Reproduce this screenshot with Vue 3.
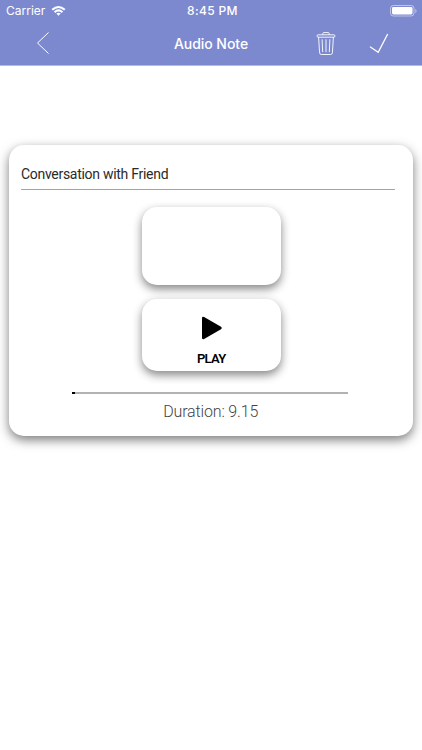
<template>
  <div class="screen">
    <!-- header -->
    <header class="header">
      <div class="status-bar">
        <div class="carrier">
          <span class="carrier-name">Carrier</span>
          <svg class="wifi" width="15" height="12" viewBox="0 0 16 12" fill="none" stroke="#fff" stroke-width="2.2">
            <path d="M1.3 4.7Q8 -1.3 14.7 4.7" />
            <path d="M3.8 7.3Q8 3.5 12.2 7.3" />
            <path d="M5.7 8.7Q8 6.9 10.3 8.7L8 11Z" fill="#fff" stroke="none" />
          </svg>
        </div>
        <span class="time">8:45 PM</span>
        <div class="battery">
          <svg width="27" height="12" viewBox="0 0 27 12">
            <rect x="0.5" y="0.5" width="23.5" height="10.5" rx="2.8" fill="none" stroke="#fff" stroke-opacity="0.5" />
            <rect x="2" y="2" width="20.5" height="7.5" rx="1.4" fill="#fff" />
            <path d="M25.3 4v4q1.3-.6 1.3-2t-1.3-2z" fill="#fff" fill-opacity="0.5" />
          </svg>
        </div>
      </div>
      <nav class="nav-bar">
        <button class="nav-button back" @click="goBack">
          <svg width="14" height="24" viewBox="0 0 14 24" fill="none" stroke="#fff">
            <path d="M12.5 1.5L1.5 12l11 10.5" />
          </svg>
        </button>
        <h1 class="title">Audio Note</h1>
        <div class="actions">
          <button class="nav-button" @click="removeNote">
            <svg width="20" height="25" viewBox="0 0 20 25" fill="none" stroke="#fff" stroke-width="0.9">
              <path d="M6.8 3.8V2.6q0-1 1-1h4.4q1 0 1 1v1.2" />
              <rect x="1.2" y="3.8" width="17.6" height="2.4" rx="0.8" />
              <path d="M2.6 6.2l1 15.6q.1 1.7 1.8 1.7h9.2q1.7 0 1.8-1.7l1-15.6" />
              <path d="M6.1 8.3l.6 12.8M10 8.3v12.8M13.9 8.3l-.6 12.8" />
            </svg>
          </button>
          <button class="nav-button save" @click="saveNote">
            <svg width="20" height="21" viewBox="0 0 20 21" fill="none" stroke="#fff" stroke-width="1.3">
              <path d="M1 13.7l8.2 5.5L18.7 1" />
            </svg>
          </button>
        </div>
      </nav>
    </header>

    <!-- note -->
    <main class="card">
      <input v-model="noteTitle" class="note-title" type="text" />
      <div class="panel"></div>
      <button class="panel play" @click="togglePlay">
        <svg class="play-icon" width="22" height="24" viewBox="0 0 22 24">
          <path d="M1 2.2Q1 0 3.1 1.1L20 10.8Q21.8 12 20 13.2L3.1 22.9Q1 24 1 21.8Z" fill="#000" />
        </svg>
        <span class="play-label">PLAY</span>
      </button>
      <div class="progress">
        <div class="progress-value" :style="{ width: progress + '%' }"></div>
      </div>
      <p class="duration">Duration: {{ duration }}</p>
    </main>
  </div>
</template>

<script setup>
import { ref } from 'vue';

const noteTitle = ref('Conversation with Friend');
const duration = ref('9.15');
// playback position in percent
const progress = ref(1.1);
const isPlaying = ref(false);

const togglePlay = () => {
  isPlaying.value = !isPlaying.value;
};

const goBack = () => {
  window.history.back();
};

const removeNote = () => {
  noteTitle.value = '';
  progress.value = 0;
};

const saveNote = () => {
  isPlaying.value = false;
};
</script>

<style>
body {
  margin: 0;
  background: #fff;
}
</style>

<style scoped>
.screen {
  height: 750px;
  overflow: hidden;
  background: #fff;
  font-family: "Inter", "Liberation Sans", sans-serif;
}

button {
  padding: 0;
  border: none;
  background: none;
  color: inherit;
  cursor: pointer;
}

svg {
  display: block;
}

.header {
  box-sizing: border-box;
  height: 66px;
  background: #7c89cf;
  border-bottom: 1px solid #b4bbdf;
  color: #fff;
}

.status-bar {
  display: grid;
  grid-template-columns: 1fr auto 1fr;
  align-items: center;
  height: 21px;
  padding: 0 5px 0 6px;
}

.carrier {
  display: flex;
  align-items: center;
  gap: 6px;
  font-size: 12px;
}

.time {
  margin-left: 2px;
  font-size: 12px;
  font-weight: 500;
  letter-spacing: 0.35px;
}

.battery {
  justify-self: end;
}

.nav-bar {
  display: grid;
  grid-template-columns: 1fr auto 1fr;
  align-items: center;
  height: 44px;
}

.back {
  justify-self: start;
  margin-left: 36px;
}

.title {
  margin: 0;
  font-size: 14px;
  font-weight: 500;
  letter-spacing: -0.05px;
}

.actions {
  display: flex;
  align-items: center;
  justify-content: flex-end;
  gap: 33px;
  padding-right: 33px;
}

.card {
  box-sizing: border-box;
  display: flex;
  flex-direction: column;
  align-items: center;
  height: 291px;
  margin: 79px 9.5px 0 9.4px;
  padding: 14px 18px 0 11.5px;
  border-radius: 15px;
  background: #fff;
  box-shadow: 0 4px 11px rgba(0, 0, 0, 0.52);
}

.note-title {
  box-sizing: border-box;
  width: 100%;
  height: 31px;
  margin-bottom: 17px;
  padding: 0;
  border: none;
  border-bottom: 1px solid #a5a5a5;
  outline: none;
  background: none;
  color: #2a2a2a;
  font-family: "Roboto", sans-serif;
  font-size: 14px;
  letter-spacing: -0.28px;
}

.panel {
  flex: none;
  width: 139px;
  height: 78px;
  margin-left: 7px;
  border-radius: 15px;
  background: #fff;
  box-shadow: 0 4px 10px rgba(0, 0, 0, 0.48);
}

.play {
  display: flex;
  flex-direction: column;
  align-items: center;
  height: 72px;
  margin-top: 14px;
  padding-top: 17px;
  color: #000;
}

.play-icon {
  margin-left: 2px;
}

.play-label {
  margin-top: 11px;
  font-family: "Roboto", sans-serif;
  font-size: 13px;
  font-weight: 600;
  line-height: 16px;
  letter-spacing: -0.7px;
}

.progress {
  flex: none;
  width: 276px;
  height: 2px;
  margin: 21px 0 0 4px;
  background: #b2b2b2;
}

.progress-value {
  height: 2px;
  background: #000;
}

.duration {
  margin: 7px 0 0 6px;
  color: #444;
  font-family: "Roboto", sans-serif;
  font-size: 16px;
  font-weight: 300;
  line-height: 22px;
  letter-spacing: -0.15px;
}
</style>
